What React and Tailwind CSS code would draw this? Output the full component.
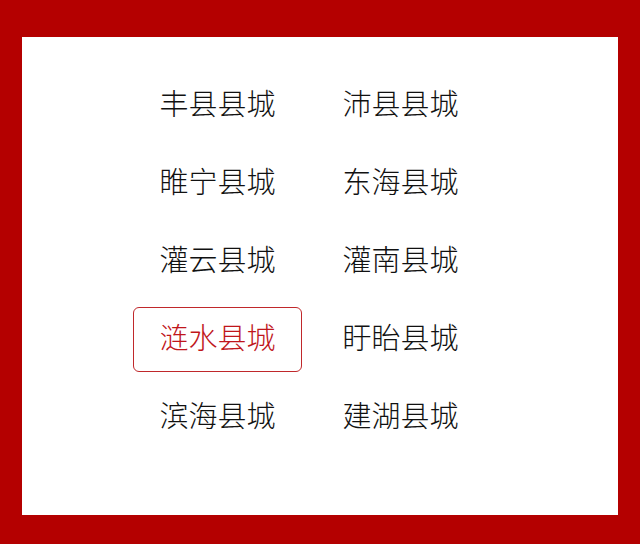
const towns = [
  '丰县县城', '沛县县城',
  '睢宁县城', '东海县城',
  '灌云县城', '灌南县城',
  '涟水县城', '盱眙县城',
  '滨海县城', '建湖县城',
]

export default function App() {
  const active = '涟水县城'
  return (
    <div className="w-[640px] h-[544px] bg-[#b40000] pt-[37px] pl-[22px]">
      <div className="w-[596px] h-[478px] bg-white pt-[36px] pl-[111px]"
        style={{ fontFamily: '"Noto Sans CJK SC", sans-serif' }}>
        <div className="grid grid-cols-[169px_169px] gap-x-[14px] gap-y-[13px]">
          {towns.map(t => (
            <div key={t}
              className={`h-[65px] pb-[6px] flex items-center justify-center rounded-[6px] text-[29px] font-light border
                ${t === active ? 'border-[#c0282b] text-[#c0161b]' : 'border-transparent text-[#111]'}`}>
              {t}
            </div>
          ))}
        </div>
      </div>
    </div>
  )
}
